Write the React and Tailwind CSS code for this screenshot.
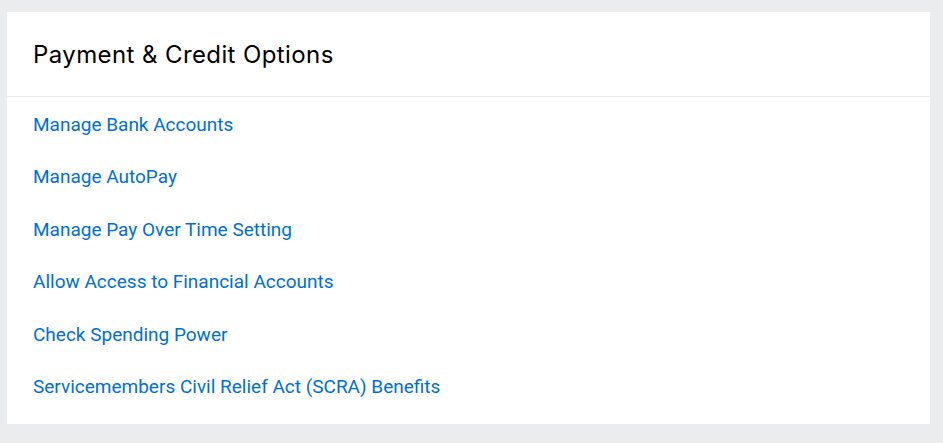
import React from 'react';

const links = [
  'Manage Bank Accounts',
  'Manage AutoPay',
  'Manage Pay Over Time Setting',
  'Allow Access to Financial Accounts',
  'Check Spending Power',
  'Servicemembers Civil Relief Act (SCRA) Benefits',
];

const App = () => {
  return (
    <div className="min-h-[443px] bg-[#eaecee] pt-3 pb-5 pl-[7px] pr-[13px]">
      <div className="bg-white">
        <div className="h-[85px] flex items-center pt-[2px] px-[26px] border-b border-[#eceef0]">
          <h1 className="text-[24px] text-black font-['Inter',sans-serif] tracking-[0.4px]">
            Payment &amp; Credit Options
          </h1>
        </div>
        <ul className="pt-[2px] pb-[11px]">
          {links.map((label) => (
            <li key={label} className="h-[52.4px] flex items-center px-[26px]">
              <a href="#" className="text-[19px] text-[#006fcf] font-['Roboto',sans-serif]">
                {label}
              </a>
            </li>
          ))}
        </ul>
      </div>
    </div>
  );
};

export default App;
